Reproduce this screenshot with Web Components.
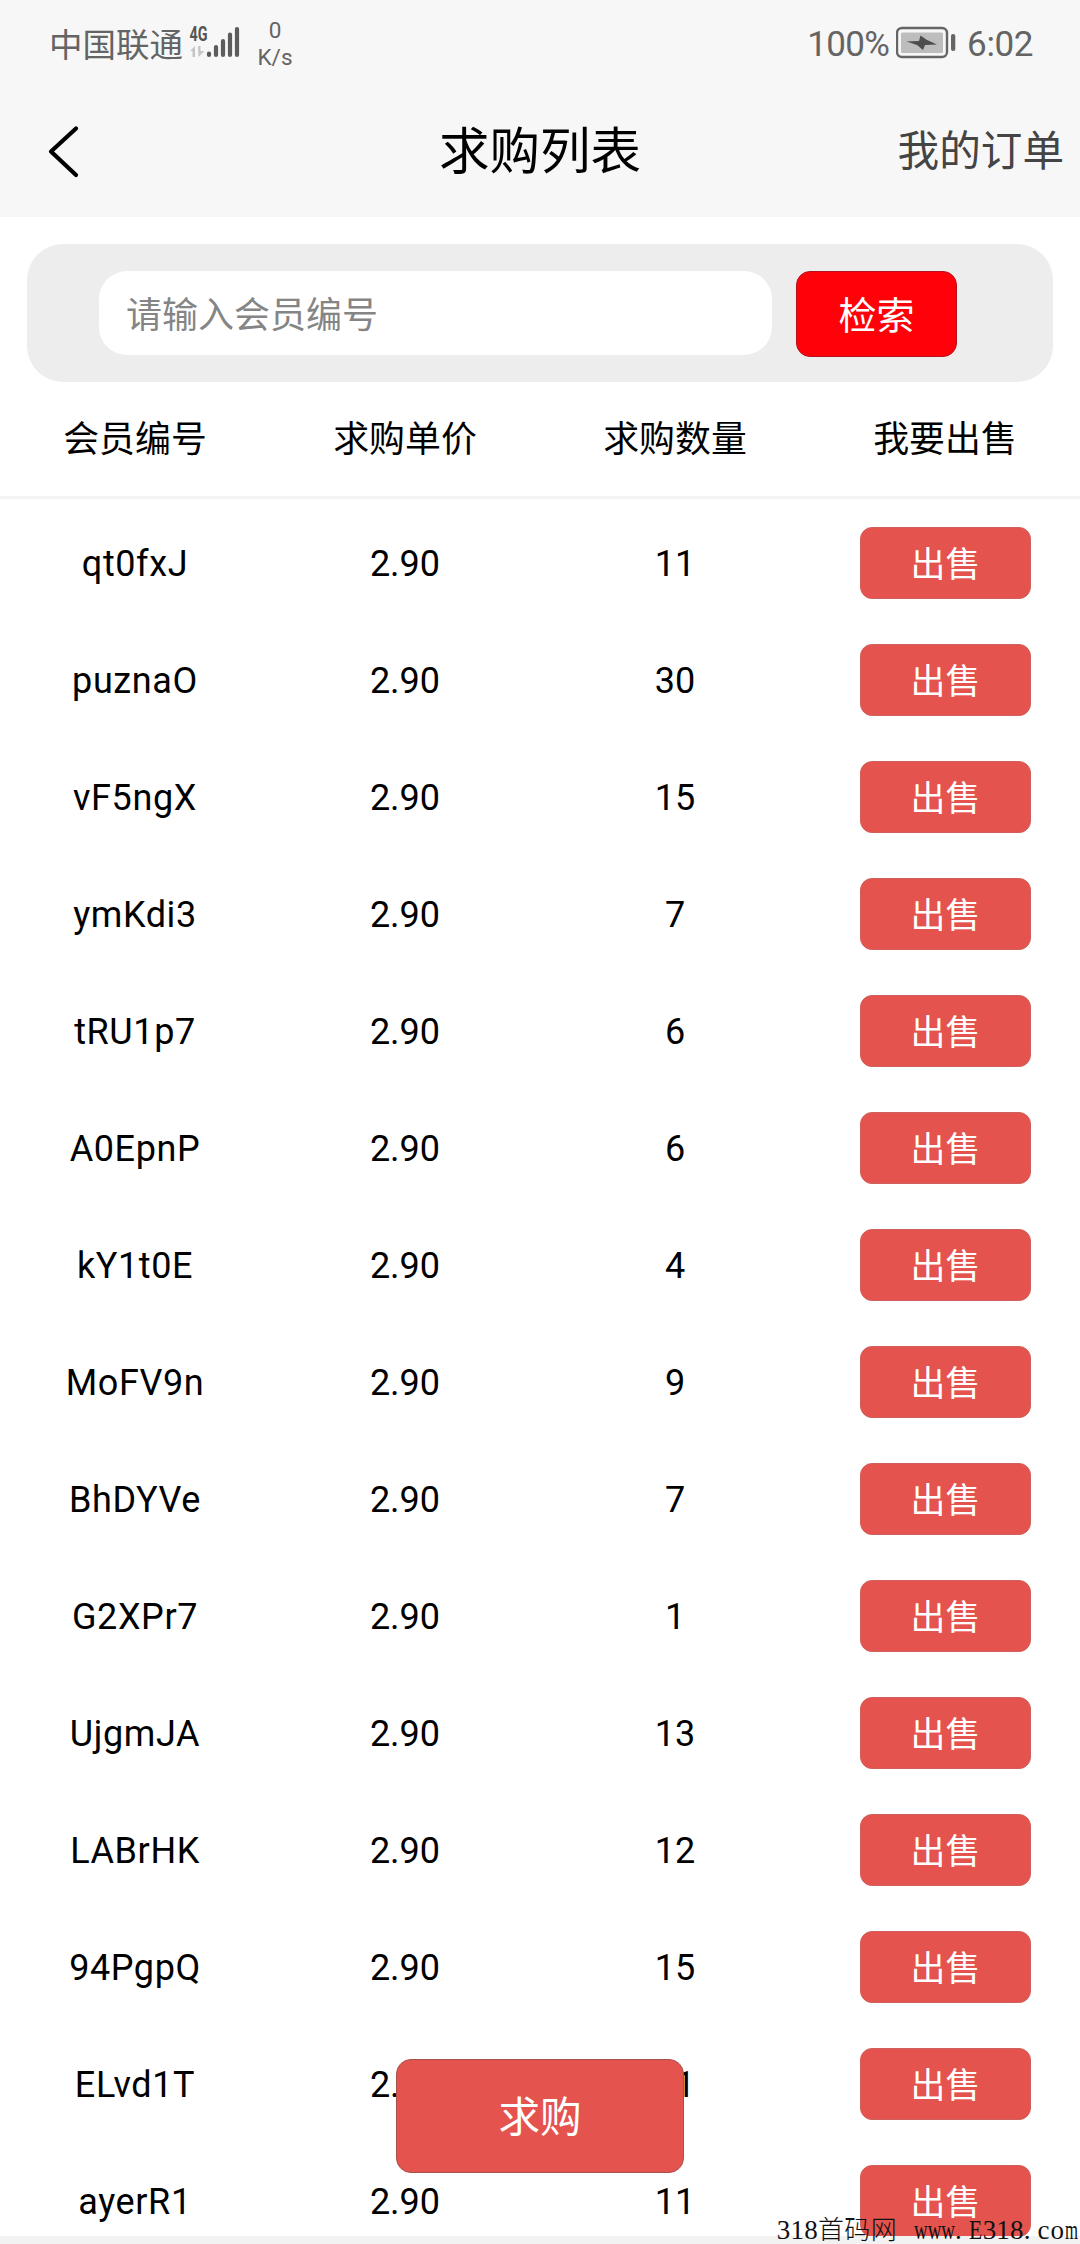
<!DOCTYPE html>
<html lang="zh-CN">
<head>
<meta charset="utf-8">
<title>求购列表</title>
<style>
    html, body {
        margin: 0;
        height: 2244px;
        overflow: hidden;
        background: #f2f2f2;
        font-family: Roboto, "Noto Sans CJK SC", sans-serif;
        color: #000;
    }
</style>
</head>
<body>
<buy-list-page></buy-list-page>

<script>
function makeTemplate(html) {
  const template = document.createElement('template');
  template.innerHTML = html;
  return template;
}

const statusTemplate = makeTemplate(`
    <style>
        :host {
            display: flex;
            justify-content: space-between;
            box-sizing: border-box;
            height: 88px;
            padding: 0 47px 0 50px;
            color: #646464;
        }
        .side {
            display: flex;
            align-items: center;
            height: 88px;
        }
        .carrier {
            width: 139px;
            padding-top: 3px;
            font-size: 33.5px;
            line-height: 85px;
            white-space: nowrap;
            text-indent: -1px;
        }
        .network {
            display: block;
        }
        .speed {
            width: 44px;
            margin-left: 12px;
            font-size: 22.5px;
            line-height: 27px;
            text-align: center;
        }
        .percent, .time {
            padding-top: 2px;
            font-size: 35px;
            line-height: 86px;
        }
        .percent {
            letter-spacing: -0.7px;
        }
        .time {
            letter-spacing: -0.4px;
        }
        .battery {
            display: block;
            margin: 0 11px 0 7px;
        }
    </style>
    <div class="side">
        <span class="carrier">中国联通</span>
        <svg class="network" width="52" height="88" viewBox="189 0 52 88">
            <text x="189.5" y="41" font-family="Roboto" font-weight="700" font-size="19.5" textLength="18" lengthAdjust="spacingAndGlyphs" fill="#555">4G</text>
            <path d="M190 51L195 46V57H192.500V51ZM198 46H200.500V51H204.500L198.500 57Z" fill="#c6c6c6"/>
            <g stroke="#5c5c5c" stroke-width="4.200" stroke-linecap="round">
                <path d="M209 53.500V55M216 47V55M223 41V55M230 34.500V55M237 29V55"/>
            </g>
        </svg>
        <div class="speed"><div>0</div><div>K/s</div></div>
    </div>
    <div class="side">
        <span class="percent">100%</span>
        <svg class="battery" width="60" height="88" viewBox="896 0 60 88">
            <rect x="897" y="28" width="50" height="29" rx="5" fill="none" stroke="#656565" stroke-width="2.400"/>
            <rect x="901" y="32.500" width="42" height="20.500" rx="1.500" fill="#bdbdbd"/>
            <path d="M906.500 41.500L919 41L920.500 35.500L927 40L937 44.500L925 45L923 50L917 45Z" fill="#4d4d4d"/>
            <rect x="951" y="34" width="4.300" height="17" rx="2" fill="#656565"/>
        </svg>
        <span class="time">6:02</span>
    </div>
`);

class StatusBar extends HTMLElement {
  constructor() {
    super();
    this.attachShadow({ mode: 'open' }).appendChild(statusTemplate.content.cloneNode(true));
  }
}
customElements.define('status-bar', StatusBar);

const navTemplate = makeTemplate(`
    <style>
        :host {
            display: grid;
            grid-template-columns: 1fr auto 1fr;
            align-items: center;
            box-sizing: border-box;
            height: 129px;
            padding: 0 16px 1px 46px;
        }
        .title {
            font-size: 50.5px;
            line-height: 70px;
            margin-left: -30px;
        }
        .action {
            justify-self: end;
            font-size: 41.6px;
            line-height: 70px;
            color: #444;
        }
        svg {
            display: block;
        }
    </style>
    <svg width="36" height="56" viewBox="46 124 36 56" fill="none" stroke="#000" stroke-width="4.200" stroke-linecap="round" stroke-linejoin="round"><path d="M76 128.500L51 151.500L76 175"/></svg>
    <div class="title"><slot></slot></div>
    <div class="action"><slot name="action"></slot></div>
`);

class NavBar extends HTMLElement {
  constructor() {
    super();
    this.attachShadow({ mode: 'open' }).appendChild(navTemplate.content.cloneNode(true));
  }
}
customElements.define('nav-bar', NavBar);

const buttonTemplate = makeTemplate(`
    <style>
        :host {
            display: flex;
            align-items: center;
            justify-content: center;
            box-sizing: border-box;
            width: 171px;
            height: 72px;
            padding-top: 8px;
            border: 1px solid #d0605c;
            border-radius: 12px;
            background: #e4534e;
            color: #fff;
            font-size: 34.9px;
            line-height: 1;
        }
        :host([kind="search"]) {
            width: 161px;
            height: 86px;
            padding-top: 3px;
            border-color: #b3131c;
            border-radius: 14px;
            background: #ff0209;
            font-size: 38px;
        }
        :host([kind="float"]) {
            width: 288px;
            height: 114px;
            padding-top: 3px;
            border-color: #a5524f;
            border-radius: 15px;
            font-size: 41.6px;
        }
    </style>
    <slot></slot>
`);

class RedButton extends HTMLElement {
  constructor() {
    super();
    this.attachShadow({ mode: 'open' }).appendChild(buttonTemplate.content.cloneNode(true));
  }
}
customElements.define('red-button', RedButton);

const searchTemplate = makeTemplate(`
    <style>
        :host {
            display: flex;
            gap: 24px;
            box-sizing: border-box;
            height: 138px;
            margin: 27px 27px 0;
            padding: 27px 0 0 72px;
            border-radius: 36px;
            background: #ededed;
        }
        input {
            box-sizing: border-box;
            width: 673px;
            height: 84px;
            padding: 6px 27px 0;
            border: 0;
            border-radius: 28px;
            background: #fff;
            font: 36px Roboto, "Noto Sans CJK SC", sans-serif;
        }
        input::placeholder {
            color: #858585;
            opacity: 1;
        }
    </style>
    <input type="text" placeholder="请输入会员编号">
    <red-button kind="search">检索</red-button>
`);

class SearchBar extends HTMLElement {
  constructor() {
    super();
    this.attachShadow({ mode: 'open' }).appendChild(searchTemplate.content.cloneNode(true));
  }
}
customElements.define('search-bar', SearchBar);

const rowTemplate = makeTemplate(`
    <style>
        :host {
            display: grid;
            grid-template-columns: repeat(4, 1fr);
            align-items: center;
            justify-items: center;
            height: 117px;
            font-size: 36px;
            line-height: 50px;
        }
        span {
            padding-top: 2px;
        }
        .id {
            letter-spacing: 0.6px;
        }
        red-button {
            margin-left: 1px;
        }
    </style>
    <span class="id"></span>
    <span class="price"></span>
    <span class="count"></span>
    <red-button>出售</red-button>
`);

class BuyRow extends HTMLElement {
  constructor() {
    super();
    this._shadowRoot = this.attachShadow({ mode: 'open' });
    this._shadowRoot.appendChild(rowTemplate.content.cloneNode(true));
  }

  setAll(id, price, count) {
    this._shadowRoot.querySelector('.id').textContent = id;
    this._shadowRoot.querySelector('.price').textContent = price;
    this._shadowRoot.querySelector('.count').textContent = count;
  }
}
customElements.define('buy-row', BuyRow);

const listTemplate = makeTemplate(`
    <style>
        :host {
            display: block;
        }
        .head {
            display: grid;
            grid-template-columns: repeat(4, 1fr);
            box-sizing: border-box;
            height: 117px;
            border-bottom: 3px solid #f3f3f3;
            font-size: 35.9px;
            line-height: 117px;
            text-align: center;
        }
        .rows {
            padding-top: 5px;
        }
    </style>
    <div class="head">
        <span>会员编号</span><span>求购单价</span><span>求购数量</span><span>我要出售</span>
    </div>
    <div class="rows"></div>
`);

class BuyList extends HTMLElement {
  constructor() {
    super();
    this._shadowRoot = this.attachShadow({ mode: 'open' });
    this._shadowRoot.appendChild(listTemplate.content.cloneNode(true));
    this.$rows = this._shadowRoot.querySelector('.rows');

    const data = [
      ['qt0fxJ', 11],
      ['puznaO', 30],
      ['vF5ngX', 15],
      ['ymKdi3', 7],
      ['tRU1p7', 6],
      ['A0EpnP', 6],
      ['kY1t0E', 4],
      ['MoFV9n', 9],
      ['BhDYVe', 7],
      ['G2XPr7', 1],
      ['UjgmJA', 13],
      ['LABrHK', 12],
      ['94PgpQ', 15],
      ['ELvd1T', 11],
      ['ayerR1', 11]
    ];

    data.forEach(([id, count]) => {
      const row = document.createElement('buy-row');
      row.setAll(id, '2.90', count);
      this.$rows.appendChild(row);
    });
  }
}
customElements.define('buy-list', BuyList);

const siteTemplate = makeTemplate(`
    <style>
        :host {
            display: block;
            color: #111;
            font: 27px/26px "Liberation Serif", "Noto Sans CJK SC", serif;
            letter-spacing: 0.2px;
            white-space: pre;
        }
        .cjk {
            font-size: 26px;
            font-weight: 300;
            letter-spacing: 0.4px;
        }
        .wide {
            display: inline-block;
            letter-spacing: 0;
            transform-origin: 0 50%;
        }
        .www {
            width: 41px;
            transform: scaleX(0.7);
        }
        .e {
            width: 14px;
            transform: scaleX(0.8);
        }
        .m {
            width: 13px;
            transform: scaleX(0.62);
        }
        .gap {
            letter-spacing: 10px;
        }
        .dot {
            letter-spacing: 7px;
        }
        .co {
            letter-spacing: 1px;
        }
    </style>318<span class="cjk">首码网</span><span class="gap"> </span><span class="wide www">www</span><span class="dot">.</span><span class="wide e">E</span>318<span class="dot">.</span><span class="co">co</span><span class="wide m">m</span>`);

class SiteMark extends HTMLElement {
  constructor() {
    super();
    this.attachShadow({ mode: 'open' }).appendChild(siteTemplate.content.cloneNode(true));
  }
}
customElements.define('site-mark', SiteMark);

const pageTemplate = makeTemplate(`
    <style>
        :host {
            display: block;
            position: relative;
            width: 1080px;
            height: 2244px;
            overflow: hidden;
        }
        .page {
            height: 2236px;
            overflow: hidden;
            background: #fff;
        }
        header {
            background: #f7f7f7;
        }
        .float {
            position: absolute;
            left: 396px;
            bottom: 71px;
        }
        site-mark {
            position: absolute;
            right: 2px;
            bottom: 0;
        }
    </style>
    <div class="page">
        <header>
            <status-bar></status-bar>
            <nav-bar>求购列表<span slot="action">我的订单</span></nav-bar>
        </header>
        <search-bar></search-bar>
        <buy-list></buy-list>
    </div>
    <red-button class="float" kind="float">求购</red-button>
    <site-mark></site-mark>
`);

class BuyListPage extends HTMLElement {
  constructor() {
    super();
    this.attachShadow({ mode: 'open' }).appendChild(pageTemplate.content.cloneNode(true));
  }
}
customElements.define('buy-list-page', BuyListPage);
</script>
</body>
</html>
